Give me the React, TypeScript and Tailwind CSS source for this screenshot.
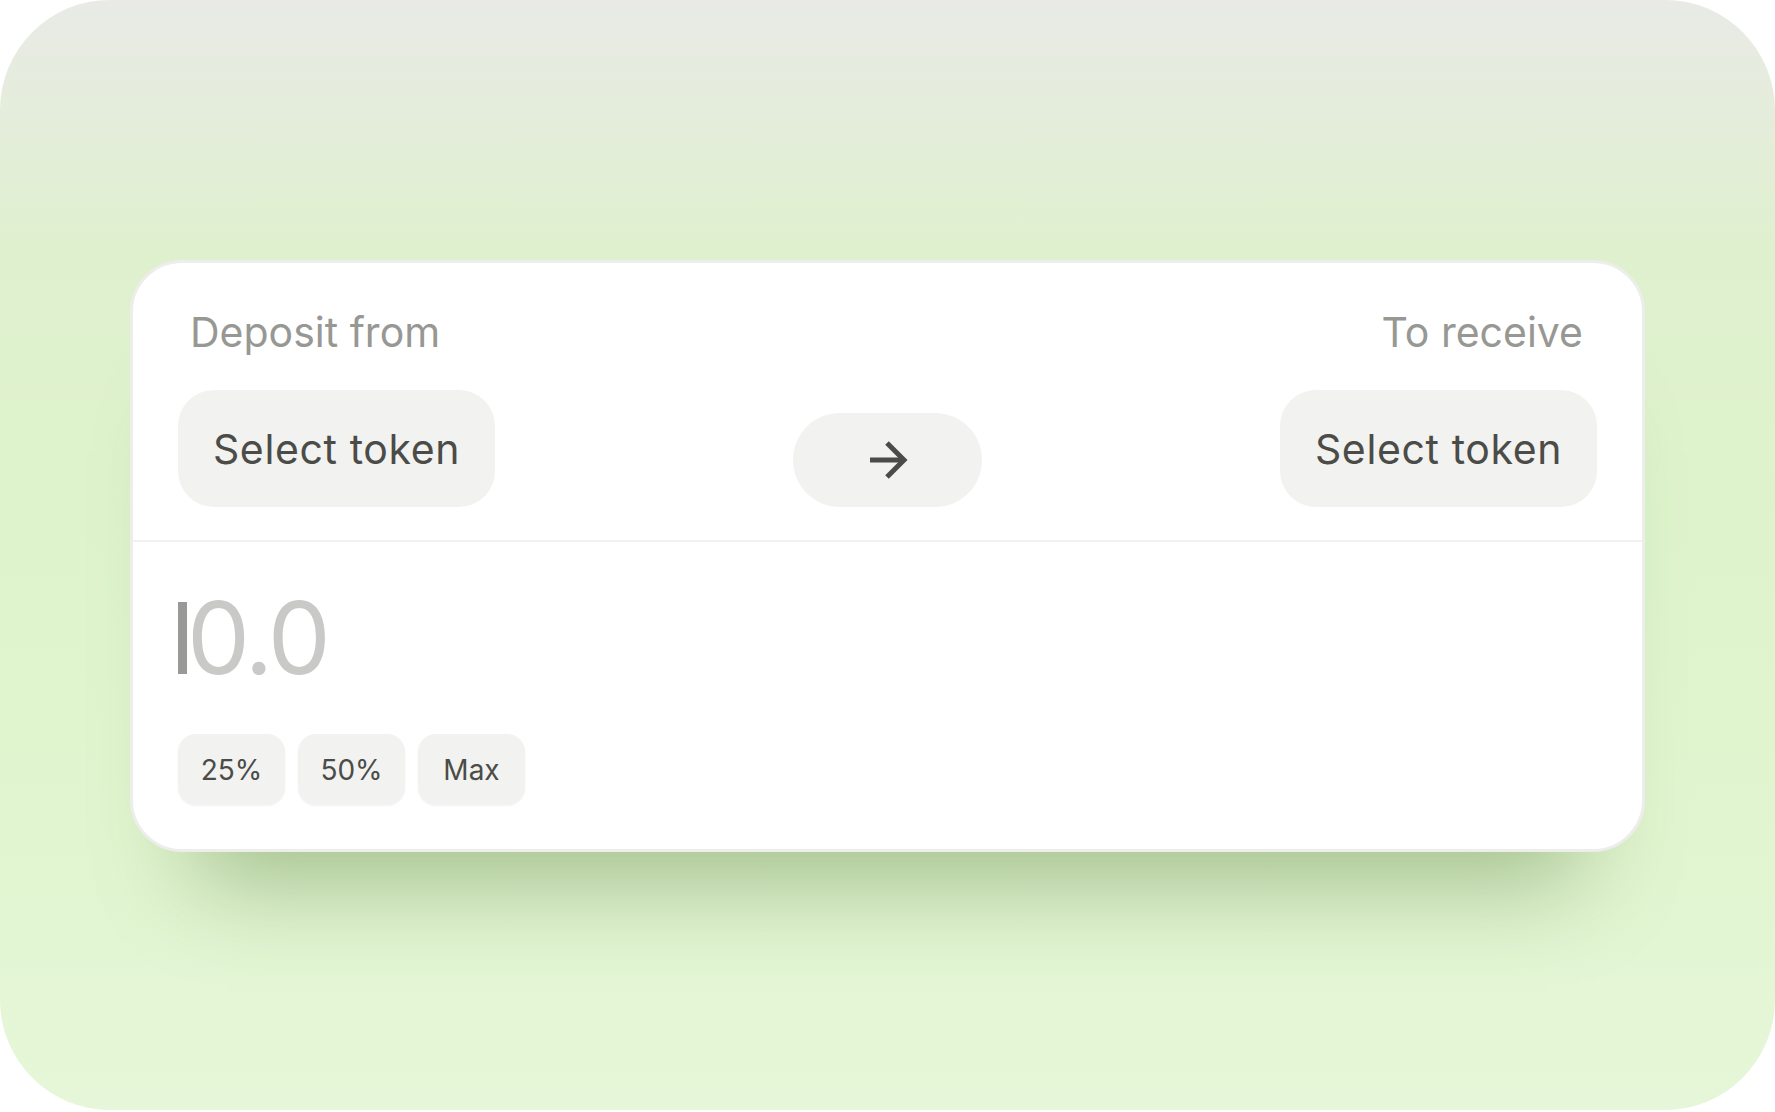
const font = { fontFamily: 'Inter, "Noto Sans", sans-serif' };

function ArrowIcon() {
  return (
    <svg width="40" height="38" viewBox="0 0 40 38" fill="none">
      <path d="M2 19 H36" stroke="#4b4c48" strokeWidth="5" />
      <path d="M19 2 L36 19 L19 36" stroke="#4b4c48" strokeWidth="5" strokeLinejoin="miter" />
    </svg>
  );
}

function TokenColumn({ label, align }: { label: string; align: 'start' | 'end' }) {
  return (
    <div className={align === 'start' ? 'flex flex-col items-start' : 'flex flex-col items-end'}>
      <div className={align === 'start' ? 'ml-[12px] text-[41px] leading-[48px] text-[#979893]' : 'mr-[14px] text-[41px] leading-[48px] text-[#979893]'}>
        {label}
      </div>
      <button className="mt-[34px] flex h-[117px] w-[317px] items-center justify-center rounded-[36px] bg-[#f2f2f1] pt-[3px] text-[41px] tracking-[0.015em] text-[#4b4c48]">
        Select token
      </button>
    </div>
  );
}

export default function App() {
  return (
    <div className="h-[1112px] w-full bg-white" style={font}>
      <div className="h-[1110px] rounded-[110px] bg-[linear-gradient(180deg,#e9eae6_0%,#dff0cf_22%,#def3cb_45%,#e1f5d0_75%,#e6f7d9_100%)] px-[130px] pt-[260px]">
        {/* Card */}
        <div className="rounded-[52px] border-[3px] border-[#ededeb] bg-white shadow-[0_95px_90px_-65px_rgba(70,110,40,0.4)]">
          <div className="flex items-end justify-between border-b-2 border-[#f1f1ef] px-[45px] pb-[33px] pt-[45px]">
            <TokenColumn label="Deposit from" align="start" />
            <button className="flex h-[94px] w-[189px] items-center justify-center rounded-full bg-[#f2f2f1]">
              <ArrowIcon />
            </button>
            <TokenColumn label="To receive" align="end" />
          </div>
          <div className="px-[45px] pb-[44px] pt-[46px]">
            <div className="flex items-start">
              <div className="mt-[14px] h-[72px] w-[9px] bg-[#999a97]" />
              <div className="text-[100px] leading-[100px] tracking-[-0.03em] text-[#c9cac7]">0.0</div>
            </div>
            <div className="mt-[46px] flex gap-[13px]">
              {['25%', '50%', 'Max'].map((p) => (
                <button
                  key={p}
                  className="flex h-[71px] w-[107px] items-center justify-center rounded-[18px] bg-[#f2f2f1] text-[28px] text-[#4b4c48] shadow-[0_1px_2px_rgba(0,0,0,0.05)]"
                >
                  {p}
                </button>
              ))}
            </div>
          </div>
        </div>
      </div>
    </div>
  );
}
